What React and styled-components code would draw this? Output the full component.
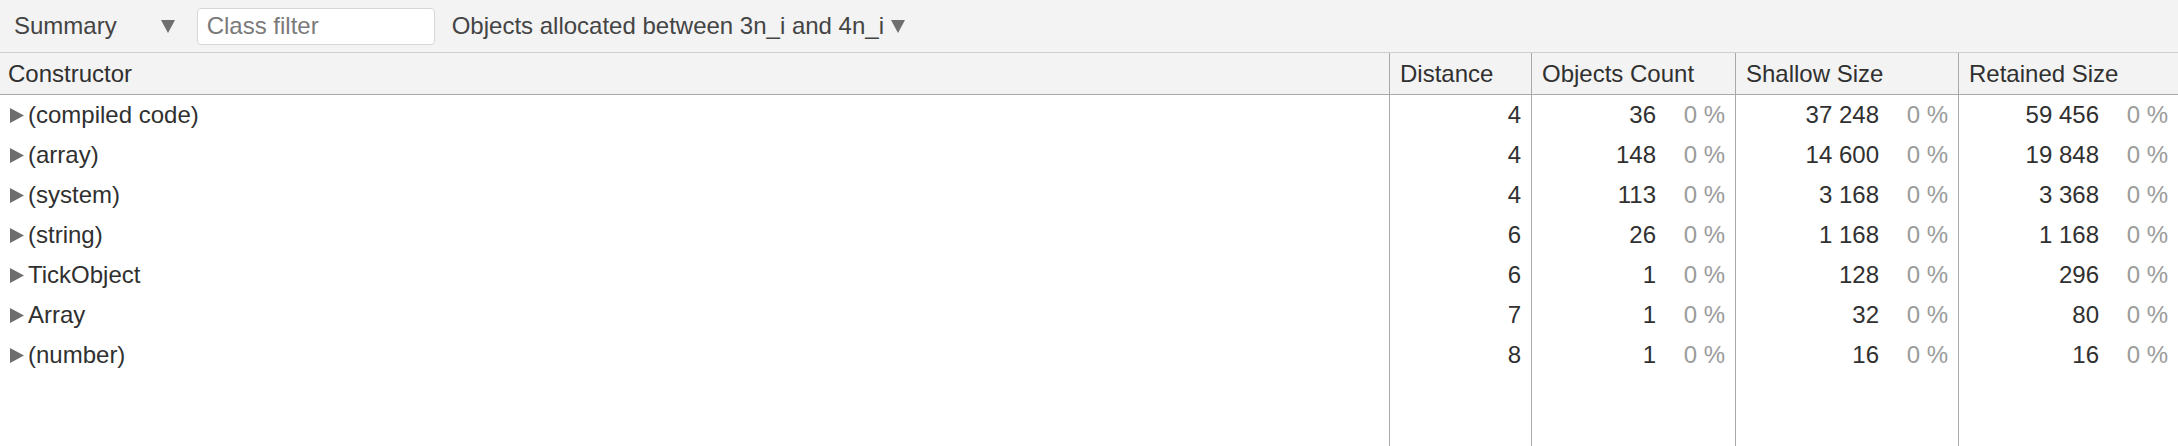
import React from "react";
import styled, { createGlobalStyle } from "styled-components";

const Global = createGlobalStyle`
  html, body, #root { margin: 0; padding: 0; height: 100%; }
  body {
    font-family: "Liberation Sans", Arial, Helvetica, sans-serif;
    font-size: 24px;
    color: #303030;
    background: #fff;
    overflow: hidden;
  }
  * { box-sizing: border-box; }
`;

const Page = styled.div`
  display: flex;
  flex-direction: column;
  height: 100vh;
`;

const Toolbar = styled.div`
  display: flex;
  align-items: center;
  height: 53px;
  padding-left: 14px;
  background: #f3f3f3;
  border-bottom: 1px solid #cfcfcf;
  flex: none;
`;

const Select = styled.div`
  display: flex;
  align-items: center;
  color: #444;
  margin-right: ${(p) => p.$after}px;
  white-space: nowrap;
`;

const Arrow = styled.svg`
  width: 14px;
  height: 13px;
  margin-left: ${(p) => p.$gap}px;
  flex: none;
`;

const Filter = styled.input`
  width: 238px;
  height: 37px;
  border: 1px solid #d6d6d6;
  border-radius: 4px;
  background: #fff;
  padding: 0 0 0 9px;
  font: inherit;
  font-size: 24px;
  color: #333;
  margin-right: 17px;
  outline: none;
  &::placeholder { color: #7a7a7a; }
`;

const Grid = styled.div`
  flex: 1;
  display: grid;
  grid-template-columns: 1389px 142px 204px 223px 1fr;
  grid-template-rows: 42px repeat(7, 40px) 1fr;
  min-height: 0;
`;

const HeadCell = styled.div`
  display: flex;
  align-items: center;
  padding-left: ${(p) => (p.$first ? 8 : 10)}px;
  background: #f3f3f3;
  border-bottom: 1px solid #a9a9a9;
  border-left: ${(p) => (p.$first ? "none" : "1px solid #a9a9a9")};
  color: #303030;
  white-space: nowrap;
`;

const Cell = styled.div`
  display: flex;
  align-items: center;
  justify-content: ${(p) => (p.$first ? "flex-start" : "flex-end")};
  padding: ${(p) => (p.$first ? "0 0 0 10px" : "0 10px 0 0")};
  border-left: ${(p) => (p.$first ? "none" : "1px solid #a9a9a9")};
  white-space: nowrap;
  color: #303030;
`;

const Expander = styled.svg`
  width: 14px;
  height: 15px;
  margin-right: 4px;
  flex: none;
`;

const Percent = styled.span`
  width: 69px;
  text-align: right;
  color: #9b9b9b;
  flex: none;
`;

const Filler = styled.div`
  border-left: ${(p) => (p.$first ? "none" : "1px solid #a9a9a9")};
`;

const rows = [
  ["(compiled code)", "4", "36", "37 248", "59 456"],
  ["(array)", "4", "148", "14 600", "19 848"],
  ["(system)", "4", "113", "3 168", "3 368"],
  ["(string)", "6", "26", "1 168", "1 168"],
  ["TickObject", "6", "1", "128", "296"],
  ["Array", "7", "1", "32", "80"],
  ["(number)", "8", "1", "16", "16"],
];

const Down = ({ gap }) => (
  <Arrow $gap={gap} viewBox="0 0 14 13">
    <polygon points="0,0 14,0 7,13" fill="#6e6e6e" />
  </Arrow>
);

export default function App() {
  return (
    <Page>
      <Global />
      <Toolbar>
        <Select $after={22}>
          Summary
          <Down gap={44} />
        </Select>
        <Filter placeholder="Class filter" />
        <Select $after={0}>
          Objects allocated between 3n_i and 4n_i
          <Down gap={7} />
        </Select>
      </Toolbar>
      <Grid>
        <HeadCell $first>Constructor</HeadCell>
        <HeadCell>Distance</HeadCell>
        <HeadCell>Objects Count</HeadCell>
        <HeadCell>Shallow Size</HeadCell>
        <HeadCell>Retained Size</HeadCell>
        {rows.map((r) => (
          <React.Fragment key={r[0]}>
            <Cell $first>
              <Expander viewBox="0 0 14 15">
                <polygon points="0,0 14,7.5 0,15" fill="#6e6e6e" />
              </Expander>
              {r[0]}
            </Cell>
            <Cell>{r[1]}</Cell>
            <Cell>
              {r[2]}
              <Percent>0 %</Percent>
            </Cell>
            <Cell>
              {r[3]}
              <Percent>0 %</Percent>
            </Cell>
            <Cell>
              {r[4]}
              <Percent>0 %</Percent>
            </Cell>
          </React.Fragment>
        ))}
        <Filler $first />
        <Filler />
        <Filler />
        <Filler />
        <Filler />
      </Grid>
    </Page>
  );
}
